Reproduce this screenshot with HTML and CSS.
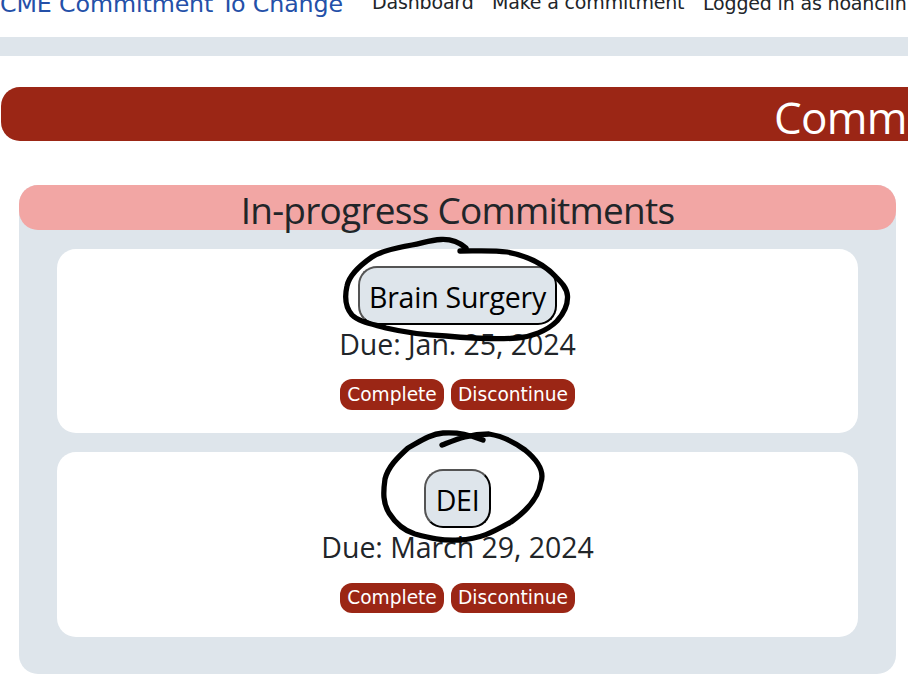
FILE: index.html
```html
<!DOCTYPE html>
<html lang="en">
<head>
<meta charset="utf-8">
<title>CME Commitment To Change</title>
<link rel="stylesheet" href="styles.css">
</head>
<body>
<header class="navbar">
  <a class="brand">CME Commitment To Change</a>
  <a class="nav-link dashboard">Dashboard</a>
  <a class="nav-link make">Make a commitment</a>
  <span class="nav-link user">Logged in as hoanclin</span>
</header>
<div class="divider"></div>
<h1 class="banner"><span>Comm</span></h1>
<main class="panel">
  <h2 class="panel-title"><span>In-progress Commitments</span></h2>
  <section class="card">
    <button class="name"><span>Brain Surgery</span></button>
    <p class="due">Due: Jan. 25, 2024</p>
    <div class="actions"><button class="action complete">Complete</button><button class="action discontinue">Discontinue</button></div>
  </section>
  <section class="card second">
    <button class="name short"><span>DEI</span></button>
    <p class="due">Due: March 29, 2024</p>
    <div class="actions"><button class="action complete">Complete</button><button class="action discontinue">Discontinue</button></div>
  </section>
</main>
<svg class="ink" width="908" height="684" viewBox="0 0 908 684">
  <path d="M466 248C459 242 451 239 441 239.500C430 240 423 243 412 245C395 248 381 251 372 257C359 266 349 276 347 286C344 299 346 308 352 315C359 322 372 324 386 328C403 332 425 335 446 336C468 338 493 340 517 338C531 337 547 331 557 321C564 313 568 305 567.500 296C567 288 561 282 556 277C545 265 529 256 507 252C493 250 476 251 460 251"/>
  <path d="M483 440C469 435 460 432 443 433C430 434 419 442 408 448C397 458 388 467 385 479C383 493 383 503 389 513C396 524 405 531 415 534C430 538 442 541 459 540C481 539 493 532 511 522C528 510 539 496 541 482C545 470 536 459 525 450C514 442 503 436 489 434C468 434 455 440 442 445"/>
</svg>
</body>
</html>
```
FILE: styles.css
```css
* { box-sizing: border-box; }
body {
  margin: 0;
  width: 908px;
  height: 684px;
  overflow: hidden;
  position: relative;
  background: #fff;
  color: #212529;
  font-family: "Open Sans", "Noto Sans", sans-serif;
}
span, a { white-space: nowrap; }
.navbar {
  display: flex;
  align-items: flex-start;
  height: 37px;
  font-family: "DejaVu Sans", sans-serif;
}
.brand {
  width: 372px;
  flex: none;
  margin-top: -10px;
  font-size: 23.75px;
  line-height: 28px;
  letter-spacing: -0.13px;
  color: #2450a8;
}
.nav-link { flex: none; margin-top: -10px; font-size: 19px; line-height: 24px; letter-spacing: -0.17px; }
.dashboard { width: 120px; }
.make { width: 211px; }
.user { margin-top: -9px; }
.divider { height: 19px; background: #dee5eb; }
.banner {
  width: 907px;
  height: 54px;
  margin: 31px 0 0 1px;
  padding-left: 773px;
  border-radius: 19px 0 0 19px;
  background: #9b2615;
  color: #fff;
  font-size: 44px;
  font-weight: 400;
  letter-spacing: -0.7px;
  line-height: 60px;
}
.panel {
  width: 877px;
  height: 489px;
  margin: 44px 0 0 19px;
  border-radius: 19px;
  background: #dee5eb;
}
.panel-title {
  height: 45px;
  margin: 0 0 19px;
  border-radius: 19px;
  background: #f2a6a4;
  font-size: 37px;
  font-weight: 400;
  letter-spacing: -0.75px;
  line-height: 49px;
  text-align: center;
}
.card {
  display: flex;
  flex-direction: column;
  align-items: center;
  width: 801px;
  height: 184px;
  margin: 0 38px 19px;
  padding-top: 17px;
  border-radius: 19px;
  background: #fff;
}
.second { height: 185px; }
.name {
  display: flex;
  justify-content: center;
  flex: none;
  width: 199px;
  height: 59px;
  padding: 0;
  border: 2px outset #000;
  border-radius: 19px;
  background: #dee5eb;
  color: #000;
  font: 28.5px/58px "Open Sans", "Noto Sans", sans-serif;
  letter-spacing: -0.25px;
}
.short { width: 67px; }
.due { margin: 0; height: 54px; font-size: 28.5px; line-height: 38px; letter-spacing: -0.05px; }
.second .due { height: 55px; }
.actions { display: flex; gap: 7px; }
.action {
  display: flex;
  justify-content: center;
  height: 31px;
  padding: 0;
  border: 0;
  border-radius: 12px;
  background: #9b2615;
  color: #fff;
  font: 18.6px/31px "DejaVu Sans", sans-serif;
}
.second .action { height: 30px; line-height: 30px; }
.complete { width: 104px; }
.discontinue { width: 124px; }
.ink { position: absolute; top: 0; left: 0; fill: none; stroke: #000; stroke-width: 5.3; stroke-linecap: round; stroke-linejoin: round; }
```
